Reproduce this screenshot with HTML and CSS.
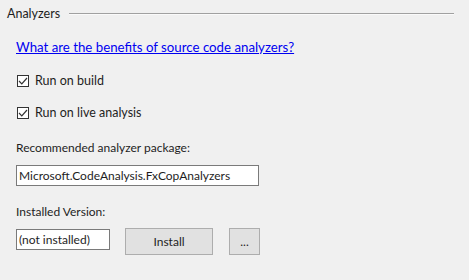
FILE: index.html
```html
<!DOCTYPE html>
<html>
<head>
<meta charset="utf-8">
<link rel="stylesheet" href="styles.css">
</head>
<body>
<div class="page">
  <div class="group-header">
    <span class="group-title">Analyzers</span>
    <span class="group-line"></span>
  </div>
  <div class="content">
    <a class="link" href="#">What are the benefits of source code analyzers?</a>
    <label class="check first">
      <span class="box"><svg width="10" height="10" viewBox="0 0 10 10"><path d="M1 5 L3.8 7.8 L9 2" fill="none" stroke="#333" stroke-width="1.2"/></svg></span>
      <span class="check-text">Run on build</span>
    </label>
    <label class="check second">
      <span class="box"><svg width="10" height="10" viewBox="0 0 10 10"><path d="M1 5 L3.8 7.8 L9 2" fill="none" stroke="#333" stroke-width="1.2"/></svg></span>
      <span class="check-text">Run on live analysis</span>
    </label>
    <div class="label pkg-label">Recommended analyzer package:</div>
    <div class="field pkg-field">Microsoft.CodeAnalysis.FxCopAnalyzers</div>
    <div class="label ver-label">Installed Version:</div>
    <div class="row">
      <div class="field ver-field">(not installed)</div>
      <div class="button install">Install</div>
      <div class="button more">...</div>
    </div>
  </div>
</div>
</body>
</html>
```
FILE: styles.css
```css
html, body {
  margin: 0;
  padding: 0;
  background: #f0f0f0;
}
body {
  width: 469px;
  height: 280px;
  overflow: hidden;
  font-family: "Lato", "Noto Sans", sans-serif;
  font-size: 12px;
  color: #1e1e1e;
}
.page {
  display: flex;
  flex-direction: column;
}
.group-header {
  display: flex;
  align-items: center;
  height: 27px;
  padding-left: 7px;
  padding-right: 15px;
}
.group-title {
  font-size: 12.5px;
  line-height: 16px;
}
.group-line {
  flex: 1;
  height: 1px;
  background: #a0a0a0;
  border-bottom: 1px solid #fafafa;
  margin-left: 9px;
}
.content {
  display: flex;
  flex-direction: column;
  align-items: flex-start;
  padding-left: 16px;
}
.link {
  color: #0000f0;
  text-decoration: underline;
  font-size: 13.25px;
  line-height: 16px;
  margin-top: 12px;
}
.check {
  display: flex;
  align-items: center;
  height: 12px;
}
.check.first { margin-top: 20px; }
.check.second { margin-top: 20px; }
.box {
  width: 10px;
  height: 10px;
  border: 1px solid #333;
  background: #fff;
  display: flex;
  align-items: center;
  justify-content: center;
  margin-left: 1px;
}
.box svg { display: block; }
.check-text {
  margin-left: 6px;
  font-size: 12.5px;
  line-height: 16px;
}
.label {
  line-height: 16px;
}
.pkg-label { margin-top: 21px; }
.field {
  box-sizing: border-box;
  height: 21px;
  border: 1px solid #7a7a7a;
  background: #fff;
  line-height: 19px;
  padding-left: 2px;
  white-space: nowrap;
}
.pkg-field {
  width: 243px;
  margin-top: 9px;
}
.ver-label { margin-top: 18px; }
.row {
  display: flex;
  align-items: flex-start;
  margin-top: 8px;
}
.ver-field {
  width: 94px;
  margin-top: 1px;
}
.button {
  box-sizing: border-box;
  height: 27px;
  border: 1px solid #adadad;
  background: #e1e1e1;
  display: flex;
  align-items: center;
  justify-content: center;
}
.install {
  width: 88px;
  margin-left: 15px;
}
.more {
  width: 31px;
  margin-left: 16px;
}
```
